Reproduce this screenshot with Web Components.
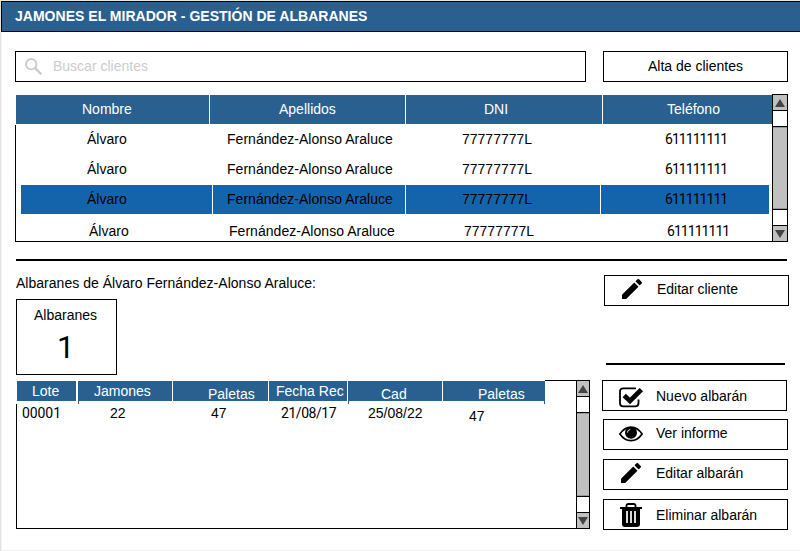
<!DOCTYPE html>
<html lang="es">
<head>
<meta charset="utf-8">
<title>Jamones El Mirador</title>
<style>
html,body{margin:0;padding:0;background:#fff}
body{font:14px/16px "Liberation Sans",Arial,sans-serif;color:#000}
</style>
</head>
<body>
<app-window></app-window>
<script>
function define(name, css, html) {
  customElements.define(name, class extends HTMLElement {
    connectedCallback() {
      if (this.shadowRoot) return;
      for (const a of ['w', 'h', 'x', 'y', 'mt', 'ml', 'ls'])
        if (this.hasAttribute(a)) this.style.setProperty('--' + a, this.getAttribute(a) + 'px');
      const root = this.attachShadow({mode: 'open'});
      root.innerHTML = '<style>:host{display:block;box-sizing:border-box;flex:none}' + css + '</style>' +
        (typeof html === 'function' ? html(this) : html);
    }
  });
}

const icons = {
  search: '<svg width="17" height="17" viewBox="0 0 17 17" fill="none" stroke="#ccc"><circle cx="6.2" cy="6.2" r="5.2" stroke-width="1.9"/><path d="M10 10L16.300 16.300" stroke-width="2.4"/></svg>',
  pencil: '<svg width="20" height="20" viewBox="3 3 18 18"><path d="M3 17.25V21h3.75L17.81 9.94l-3.75-3.75L3 17.25zM20.71 7.04a1 1 0 0 0 0-1.41l-2.34-2.34a1 1 0 0 0-1.41 0l-1.83 1.83 3.75 3.75 1.83-1.83z"/></svg>',
  check: '<svg width="24" height="21" viewBox="0 0 24 21"><path d="M17 1.3H4.3Q1 1.3 1 4.6V16Q1 19.4 4.3 19.4H16.2Q19.5 19.4 19.5 16V12.5" fill="none" stroke="#000" stroke-width="1.8"/><path d="M5.2 8.600L11 14L22.300 2.600" fill="none" stroke="#000" stroke-width="4.8"/></svg>',
  eye: '<svg width="24" height="16" viewBox="0 0 24 16"><path d="M.9 8Q5.5 1.1 12 1.1T23.1 8Q18.500 14.700 12 14.700T.9 8Z" fill="#fff" stroke="#000" stroke-width="1.7"/><circle cx="12" cy="6.800" r="6"/><path d="M8.300 6.600Q8.500 3.900 11.300 3.400" fill="none" stroke="#fff" stroke-width=".9"/></svg>',
  trash: '<svg width="22" height="24" viewBox="0 0 22 24"><path d="M0 4H22V6H20V21Q20 24 17 24H5Q2 24 2 21V6H0Z"/><path d="M6.500 4V2.700Q6.500 1 8.300 1H13.700Q15.500 1 15.500 2.700V4" fill="none" stroke="#000" stroke-width="1.800"/><path d="M7 8V20M11 8V20M15 8V20" stroke="#fff" stroke-width="1.700"/></svg>'
};

define('title-bar',
  ':host{margin:1px 0 0 1px;height:31px;border:1px solid #000;border-right:0;background:#296090;color:#fff;font-weight:bold;padding:6px 0 0 13px;white-space:nowrap;letter-spacing:.02px}',
  '<slot></slot>');

define('search-box',
  ':host{display:flex;width:571px;height:31px;border:1px solid #000;color:#ccc;padding:6px 0 0 9px}svg{width:17px;height:17px;margin-right:11px}',
  icons.search + '<slot></slot>');

define('action-button',
  `:host{display:flex;width:185px;height:31px;border:1px solid #000;margin:var(--mt,0) 0 0 var(--ml,0);padding:var(--y,6px) 0 0 var(--x,44px);white-space:nowrap}
   .icon{height:0;overflow:visible}
   svg{display:block}`,
  el => {
    const name = el.getAttribute('icon');
    if (!name) return '<slot></slot>';
    return `<span class="icon" style="width:${el.getAttribute('gap')}px;margin-top:${el.getAttribute('rise')}px">${icons[name]}</span><slot></slot>`;
  });

define('table-cell',
  `:host{width:var(--w);height:var(--h,auto);padding:var(--y,6px) 0 0 var(--x,0);white-space:nowrap;letter-spacing:var(--ls,normal)}
   :host([num]){font-family:Roboto,"Liberation Sans",sans-serif}
   :host([head]){background:#296090;color:#fff}
   :host([sel]){background:#1464ac}
   :host([tick]){background:linear-gradient(#296090,#296090) 0 0/100% 20px no-repeat,linear-gradient(#296090,#296090) 0 0/1px 100% no-repeat}
   :host([tick=end]){background-position:0 0,100% 0}`,
  '<slot></slot>');

define('table-row',
  ':host{display:flex;height:var(--h);margin-left:var(--ml,0);gap:var(--gap,0)}', '<slot></slot>');

define('scroll-bar',
  `:host{width:var(--w);border:1px solid #000;display:flex;flex-direction:column;background:#fff}
   .b{height:15px;background:#c0c0c0;display:flex;justify-content:center;align-items:center}
   .b svg{display:block}
   .t{flex:1;margin:15px 0;border:solid #000;border-width:1px 0;background:#c0c0c0;box-shadow:inset 0 1px #999,inset 0 -1px #999}
   .u{border-bottom:1px solid #000}.d{border-top:1px solid #000}`,
  `<div class="b u"><svg width="10" height="8"><path d="M0 8L5 0L10 8Z" fill="#444"/></svg></div><div class="t"></div>
   <div class="b d"><svg width="10" height="8"><path d="M0 0L5 8L10 0Z" fill="#444"/></svg></div>`);

define('rule-line',
  ':host{width:var(--w);height:2px;background:#000;margin:var(--mt,0) 0 0 var(--ml,0)}', '');

const person = `<table-cell w="140" x="71">Álvaro</table-cell><table-cell w="235" x="71" ls="0.04">Fernández-Alonso Araluce</table-cell><table-cell w="203" x="71">77777777L</table-cell><table-cell num w="120" x="71" ls="-0.95">611111111</table-cell>`;

define('clients-table',
  `:host{display:flex;width:773px;height:148px;margin:12px 0 0 15px}
   .main{width:757px;box-sizing:border-box;padding-top:1px}
   .head{--gap:1px}
   .rows{margin-top:1px;height:117px;box-sizing:border-box;border:solid #000;border-width:0 0 1px 1px}
   .sel{--gap:1px}`,
  `<div class="main">
    <table-row class="head" ml="1" h="29">
      <table-cell head w="193" x="66">Nombre</table-cell><table-cell head w="195" x="69">Apellidos</table-cell><table-cell head w="196" x="78">DNI</table-cell><table-cell head w="169" x="64">Teléfono</table-cell>
    </table-row>
    <div class="rows">
      <table-row h="30">${person}</table-row>
      <table-row h="30">${person}</table-row>
      <table-row class="sel" ml="5" h="29">
        <table-cell sel w="191" x="66">Álvaro</table-cell><table-cell sel w="192" x="14" ls="0.04">Fernández-Alonso Araluce</table-cell><table-cell sel w="194" x="56">77777777L</table-cell><table-cell sel num w="168" x="64" ls="-0.95">611111111</table-cell>
      </table-row>
      <table-row class="last" ml="2" h="27" style="padding-top:3px;box-sizing:border-box">${person}</table-row>
    </div>
  </div><scroll-bar w="16"></scroll-bar>`);

define('notes-table',
  `:host{display:flex;width:574px;height:149px;margin-top:5px}
   .main{width:560px;box-sizing:border-box;padding-top:1px;border-bottom:1px solid #000;
     background:linear-gradient(#000,#000) 529px 0/31px 1px no-repeat,linear-gradient(#000,#000) 0 24px/1px 130px no-repeat}
   .head{--gap:1px}`,
  `<div class="main">
    <table-row class="head" ml="1" h="23">
      <table-cell head h="20" w="59" x="15" y="2">Lote</table-cell><table-cell head tick w="94" x="16" y="2" style="margin-left:1px">Jamones</table-cell><table-cell head h="20" w="95" x="35" y="5">Paletas</table-cell><table-cell head h="20" w="78" x="7" y="2">Fecha Rec</table-cell><table-cell head tick w="94" x="33" y="5">Cad</table-cell><table-cell head tick="end" w="102" x="35" y="5">Paletas</table-cell>
    </table-row>
    <table-row ml="6" h="24">
      <table-cell num w="88" y="1" ls="-0.08">00001</table-cell><table-cell w="101" y="1">22</table-cell><table-cell w="70" y="1">47</table-cell><table-cell num w="87" y="1" ls="-0.45">21/08/17</table-cell><table-cell w="101" y="1">25/08/22</table-cell><table-cell w="40" y="4">47</table-cell>
    </table-row>
  </div><scroll-bar w="14"></scroll-bar>`);

define('stat-card',
  `:host{width:101px;height:76px;border:1px solid #000;margin-top:8px;padding:7px 0 0 17px}
   .n{font-family:Roboto,"Liberation Sans",sans-serif;font-size:31px;line-height:34px;padding:8px 0 0 23px}`,
  '<slot></slot><div class="n"><slot name="value"></slot></div>');

define('app-window',
  `:host{width:800px;height:551px;display:flex;flex-direction:column;overflow:hidden;
     background:linear-gradient(#dfeae4,#dfeae4) 0 0/100% 1px no-repeat,linear-gradient(#e2e2e2,#e2e2e2) 0 0/1px 100% no-repeat,linear-gradient(#f3f3f3,#f3f3f3) 1px 0/1px 100% no-repeat,linear-gradient(#f2f2f2,#f2f2f2) 0 100%/100% 1px no-repeat,#fff}
   .top{display:flex;gap:17px;margin:19px 0 0 15px}
   .low{display:grid;grid-template-columns:586px auto;margin-left:16px;padding-top:14px}
   .caption{letter-spacing:.025px}`,
  `<title-bar>JAMONES EL MIRADOR - GESTIÓN DE ALBARANES</title-bar>
   <div class="top"><search-box>Buscar clientes</search-box><action-button>Alta de clientes</action-button></div>
   <clients-table></clients-table>
   <rule-line w="771" mt="17" ml="16"></rule-line>
   <div class="low">
     <div>
       <div class="caption">Albaranes de Álvaro Fernández-Alonso Araluce:</div>
       <stat-card>Albaranes<span slot="value">1</span></stat-card>
       <notes-table></notes-table>
     </div>
     <div>
       <action-button icon="pencil" ml="2" x="17" y="5" gap="35" rise="-2">Editar cliente</action-button>
       <rule-line w="179" mt="57" ml="4"></rule-line>
       <action-button icon="check" mt="15" x="16" y="7" gap="37" rise="-1">Nuevo albarán</action-button>
       <action-button icon="eye" mt="8" ml="1" x="15" y="5" gap="37" rise="1">Ver informe</action-button>
       <action-button icon="pencil" mt="9" ml="1" x="17" y="5" gap="35" rise="-2">Editar albarán</action-button>
       <action-button icon="trash" mt="9" ml="1" x="16" y="7" gap="36" rise="-4">Eliminar albarán</action-button>
     </div>
   </div>`);
</script>
</body>
</html>
